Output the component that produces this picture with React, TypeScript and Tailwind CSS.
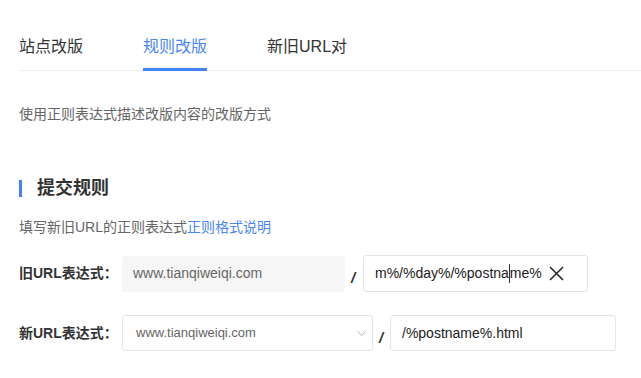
import { ChevronDown } from 'lucide-react';

const cjk = { fontFamily: '"Liberation Sans", "Noto Sans CJK SC", sans-serif' };

export default function App() {
  const tabs = ['站点改版', '规则改版', '新旧URL对'];
  const active = 1;

  return (
    <div className="w-[641px] h-[378px] bg-white overflow-hidden text-[#333]" style={cjk}>
      {/* Tabs */}
      <div className="ml-[19px] pt-[35px] flex gap-[60px] border-b border-[#eeeeee]">
        {tabs.map((t, i) => (
          <div
            key={t}
            className={`text-[16px] leading-[24px] pb-[9px] border-b-[3px] -mb-px ${
              i === active ? 'border-[#4382f6] text-[#4a86f7]' : 'border-transparent text-[#333]'
            }`}
          >
            {t}
          </div>
        ))}
      </div>

      <div className="pl-[19px]">
        <p className="mt-[33px] text-[14px] leading-[20px] text-[#666]">使用正则表达式描述改版内容的改版方式</p>

        {/* Section heading */}
        <div className="mt-[52px] flex items-center h-[24px]">
          <div className="w-[3px] h-[17px] bg-[#4382f6]" />
          <h2 className="ml-[15px] text-[18px] font-bold text-[#333] leading-[24px]">提交规则</h2>
        </div>

        <p className="mt-[17px] text-[14px] leading-[20px] text-[#666]">
          填写新旧URL的正则表达式<span className="text-[#4a86f7]">正则格式说明</span>
        </p>

        {/* Old URL row */}
        <div className="mt-[18px] flex items-center">
          <div className="w-[103px] text-[14px] font-bold text-[#333]">旧URL表达式：</div>
          <div className="w-[223px] h-[36px] bg-[#f6f6f6] rounded-[3px] flex items-center pl-[11px] text-[14px] text-[#666]">
            www.tianqiweiqi.com
          </div>
          <span className="ml-[6px] mt-[10px] w-[12px] text-[15px] font-bold italic text-[#333]">/</span>
          <div className="w-[225px] h-[37px] border border-[#e5e5e5] rounded-[3px] flex items-center pl-[11px] text-[14px] text-[#222]">
            <div className="whitespace-nowrap flex items-center">
              <span>m%/%day%/%postna</span>
              <span className="inline-block w-px h-[19px] bg-[#333]" />
              <span>me%</span>
            </div>
            <svg width="15" height="15" viewBox="0 0 15 15" className="ml-[7px]">
              <path d="M1 1 L14 14 M14 1 L1 14" stroke="#222" strokeWidth="1.5" fill="none" />
            </svg>
          </div>
        </div>

        {/* New URL row */}
        <div className="mt-[23px] flex items-center">
          <div className="w-[103px] text-[14px] font-bold text-[#333]">新URL表达式：</div>
          <div className="w-[251px] h-[36px] border border-[#e5e5e5] rounded-[3px] flex items-center pl-[13px] pr-[3px] text-[13px] text-[#666]">
            <span className="flex-1">www.tianqiweiqi.com</span>
            <ChevronDown size={15} strokeWidth={1.2} className="text-[#999]" />
          </div>
          <span className="ml-[6px] mt-[10px] w-[11px] text-[15px] font-bold italic text-[#333]">/</span>
          <div className="w-[226px] h-[36px] border border-[#e5e5e5] rounded-[3px] flex items-center pl-[11px] text-[14px] text-[#222]">
            /%postname%.html
          </div>
        </div>
      </div>
    </div>
  );
}
